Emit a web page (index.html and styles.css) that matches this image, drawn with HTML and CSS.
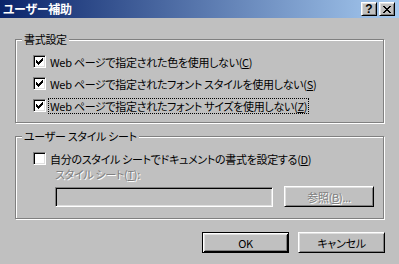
FILE: index.html
```html
<!DOCTYPE html>
<html lang="ja">
<head>
<meta charset="utf-8">
<title>ユーザー補助</title>
<link rel="stylesheet" href="styles.css">
</head>
<body>
<div class="window">
  <div class="titlebar">
    <span class="title">ユーザー補助</span>
    <div class="caption-btns">
      <span class="cbtn help">?</span>
      <span class="cbtn close"><svg width="8" height="7" viewBox="0 0 8 7" shape-rendering="crispEdges"><path d="M0 0h2v1h-2zM6 0h2v1h-2zM1 1h2v1h-2zM5 1h2v1h-2zM2 2h4v1h-4zM3 3h2v1h-2zM2 4h4v1h-4zM1 5h2v1h-2zM5 5h2v1h-2zM0 6h2v1h-2zM6 6h2v1h-2z" fill="#000"/></svg></span>
    </div>
  </div>
  <div class="client">
    <div class="group g1">
      <span class="legend">書式設定</span>
      <div class="rows">
        <div class="row"><span class="check"><svg width="11" height="11" viewBox="0 0 11 11" shape-rendering="crispEdges"><path d="M2 4h1v3h-1zM3 5h1v3h-1zM4 6h1v3h-1zM5 5h1v3h-1zM6 4h1v3h-1zM7 3h1v3h-1zM8 2h1v3h-1z" fill="#000"/></svg></span><span class="label">Web ページで指定された色を使用しない(<u>C</u>)</span></div>
        <div class="row"><span class="check"><svg width="11" height="11" viewBox="0 0 11 11" shape-rendering="crispEdges"><path d="M2 4h1v3h-1zM3 5h1v3h-1zM4 6h1v3h-1zM5 5h1v3h-1zM6 4h1v3h-1zM7 3h1v3h-1zM8 2h1v3h-1z" fill="#000"/></svg></span><span class="label">Web ページで指定されたフォント スタイルを使用しない(<u>S</u>)</span></div>
        <div class="row"><span class="check"><svg width="11" height="11" viewBox="0 0 11 11" shape-rendering="crispEdges"><path d="M2 4h1v3h-1zM3 5h1v3h-1zM4 6h1v3h-1zM5 5h1v3h-1zM6 4h1v3h-1zM7 3h1v3h-1zM8 2h1v3h-1z" fill="#000"/></svg></span><span class="label focus">Web ページで指定されたフォント サイズを使用しない(<u>Z</u>)</span></div>
      </div>
    </div>
    <div class="group g2">
      <span class="legend">ユーザー スタイル シート</span>
      <div class="row"><span class="check"></span><span class="label">自分のスタイル シートでドキュメントの書式を設定する(<u>D</u>)</span></div>
      <div class="sub">
        <div class="sublabel">スタイル シート(<u>T</u>):</div>
        <div class="fieldrow">
          <span class="textbox"></span>
          <span class="btn browse disabled">参照(<u>B</u>)...</span>
        </div>
      </div>
    </div>
    <div class="actions">
      <span class="btn default">OK</span>
      <span class="btn">キャンセル</span>
    </div>
  </div>
</div>
</body>
</html>
```
FILE: styles.css
```css
* { box-sizing: border-box; }
body { margin: 0; }

.window {
  width: 399px;
  height: 264px;
  background: #c0c0c0;
  font-family: "Noto Sans CJK JP", "Noto Sans", sans-serif;
  font-size: 11px;
  letter-spacing: -0.3px;
  color: #000;
  overflow: hidden;
  font-feature-settings: "palt" 1;
}

.titlebar {
  height: 18px;
  display: flex;
  align-items: center;
  padding: 0 4px 0 3px;
  background: linear-gradient(to right, #0a246a, #a6caf0);
}
.title {
  flex: 1;
  color: #fff;
  font-weight: bold;
  font-size: 12px;
  line-height: 18px;
}
.caption-btns { display: flex; gap: 2px; }
.cbtn {
  width: 16px;
  height: 14px;
  display: flex;
  align-items: center;
  justify-content: center;
  background: #c0c0c0;
  border: 1px solid;
  border-color: #fff #000 #000 #fff;
  box-shadow: inset 1px 1px #dfdfdf, inset -1px -1px #808080;
  font-weight: bold;
  font-size: 12px;
  line-height: 1;
  letter-spacing: 0;
  font-family: "Liberation Sans", sans-serif;
}
.cbtn svg { display: block; }

.client { padding: 21px 0 0 15px; }

.group {
  position: relative;
  width: 369px;
  border: 1px solid #808080;
  box-shadow: inset 1px 1px #fff, 1px 1px #fff;
}
.g1 { height: 84px; padding: 15px 0 0 17px; }
.g2 { height: 83px; margin-top: 13px; padding: 15px 0 0 17px; }

.legend {
  position: absolute;
  top: -9px;
  left: 6px;
  padding: 0 2px;
  background: #c0c0c0;
  line-height: 16px;
  white-space: nowrap;
}

.rows { display: flex; flex-direction: column; gap: 9px; }
.row { display: flex; align-items: center; height: 13px; }

.check {
  width: 13px;
  height: 13px;
  flex: none;
  background: #fff;
  border: 1px solid;
  border-color: #808080 #fff #fff #808080;
  box-shadow: inset 1px 1px #000, inset -1px -1px #dfdfdf;
}
.check svg { display: block; }

.label {
  margin-left: 2px;
  padding: 0 1px;
  border: 1px dotted transparent;
  line-height: 14px;
  white-space: nowrap;
}
.label.focus { border-color: #000; }

.sub { margin-left: 22px; }
.sublabel {
  margin-top: 3px;
  line-height: 13px;
  color: #808080;
  text-shadow: 1px 1px #fff;
  white-space: nowrap;
}
.fieldrow {
  display: flex;
  align-items: flex-end;
  gap: 11px;
  margin-top: 5px;
}
.textbox {
  width: 218px;
  height: 20px;
  background: #c0c0c0;
  border: 1px solid;
  border-color: #808080 #fff #fff #808080;
  box-shadow: inset 1px 1px #000, inset -1px -1px #dfdfdf;
}

.btn {
  width: 87px;
  height: 21px;
  display: flex;
  align-items: center;
  justify-content: center;
  background: #c0c0c0;
  border: 1px solid;
  border-color: #fff #000 #000 #fff;
  box-shadow: inset 1px 1px #dfdfdf, inset -1px -1px #808080;
  white-space: nowrap;
  line-height: 14px;
}
.btn.browse { width: 90px; }
.btn.disabled { color: #808080; text-shadow: 1px 1px #fff; }
.btn.default {
  border-color: #000;
  box-shadow: inset 1px 1px #fff, inset -1px -1px #000, inset 2px 2px #dfdfdf, inset -2px -2px #808080;
}

.actions {
  display: flex;
  justify-content: flex-end;
  gap: 9px;
  margin-top: 13px;
  padding-right: 14px;
}
```
